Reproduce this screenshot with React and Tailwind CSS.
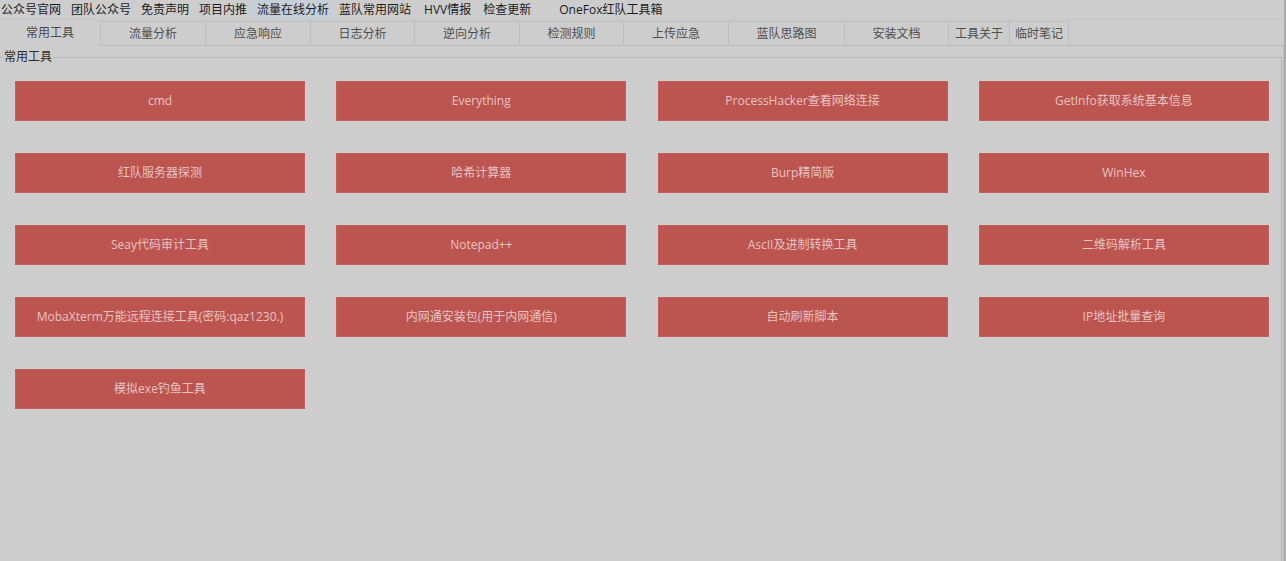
import React from "react";

const MENU = [
  { label: "公众号官网" },
  { label: "团队公众号" },
  { label: "免责声明" },
  { label: "项目内推" },
  { label: "流量在线分析", active: true },
  { label: "蓝队常用网站" },
  { label: "HVV情报", shift: "ml-[3px]" },
  { label: "检查更新", shift: "ml-[2px]" },
  { label: "OneFox红队工具箱", shift: "ml-[18px]" },
];

const TABS = [
  { label: "常用工具", w: "w-[101px]", selected: true },
  { label: "流量分析", w: "w-[105px]" },
  { label: "应急响应", w: "w-[105px]" },
  { label: "日志分析", w: "w-[104px]" },
  { label: "逆向分析", w: "w-[105px]" },
  { label: "检测规则", w: "w-[104px]" },
  { label: "上传应急", w: "w-[105px]" },
  { label: "蓝队思路图", w: "w-[116px]" },
  { label: "安装文档", w: "w-[104px]" },
  { label: "工具关于", w: "w-[61px]" },
  { label: "临时笔记", w: "w-[59px]" },
];

const TOOLS = [
  "cmd",
  "Everything",
  "ProcessHacker查看网络连接",
  "GetInfo获取系统基本信息",
  "红队服务器探测",
  "哈希计算器",
  "Burp精简版",
  "WinHex",
  "Seay代码审计工具",
  "Notepad++",
  "AscII及进制转换工具",
  "二维码解析工具",
  "MobaXterm万能远程连接工具(密码:qaz1230.)",
  "内网通安装包(用于内网通信)",
  "自动刷新脚本",
  "IP地址批量查询",
  "模拟exe钓鱼工具",
];

const FONT = "font-['Segoe_UI','Open_Sans','Noto_Sans_CJK_SC',sans-serif]";

export default function App() {
  return (
    <div className={`flex h-[561px] w-[1286px] overflow-hidden bg-[#cdcdcd] ${FONT}`}>
      <div className="flex min-w-0 flex-1 flex-col">
        {/* menu bar */}
        <div className="flex h-[20px] shrink-0 items-stretch border-b border-[#c6c6c6] pl-[1px] text-[12px] text-[#1c1c1c]">
          {MENU.map((m, i) => (
            <div
              key={m.label}
              className={`flex items-center leading-none ${i === 0 ? "pr-[5px]" : "px-[5px]"} ${m.shift ?? ""} ${m.active ? "bg-[#c6cfd8]" : ""}`}
            >
              {m.label}
            </div>
          ))}
        </div>

        {/* tab strip */}
        <div className="flex h-[26px] shrink-0 items-end">
          {TABS.map((t) => (
            <div
              key={t.label}
              className={`flex h-[25px] ${t.w} shrink-0 items-center justify-center text-[12px] leading-none ${
                t.selected
                  ? "border-r border-[#bdbdbd] pb-[1px] text-[#4a4a4a]"
                  : "border-r border-t border-b border-[#bdbdbd] pt-[1px] text-[#4f4f4f]"
              }`}
            >
              {t.label}
            </div>
          ))}
          <div className="h-full flex-1 border-b border-[#bdbdbd]" />
        </div>

        {/* panel */}
        <div className="flex flex-1 flex-col border-r border-[#bcbcbc] pr-[1px] pt-[11px]">
          <div className="relative flex-1 border-r border-t border-[#b6b6b6]">
            <span className="absolute -top-[8px] left-[4px] bg-[#cdcdcd] pr-[1px] text-[12px] leading-[14px] text-[#2a2a2a]">
              常用工具
            </span>
            <div className="grid grid-cols-[290px_290px_290px_290px] gap-x-[31.3px] gap-y-[32px] pl-[15px] pt-[23px]">
              {TOOLS.map((t) => (
                <button
                  key={t}
                  className="flex h-[40px] items-center justify-center border border-[#c3605c] bg-[#bc5450] text-[12px] leading-none text-[#e6c4c2]"
                >
                  {t}
                </button>
              ))}
            </div>
          </div>
        </div>
      </div>
      <div className="w-[2px] shrink-0 bg-[#ababab]" />
    </div>
  );
}
